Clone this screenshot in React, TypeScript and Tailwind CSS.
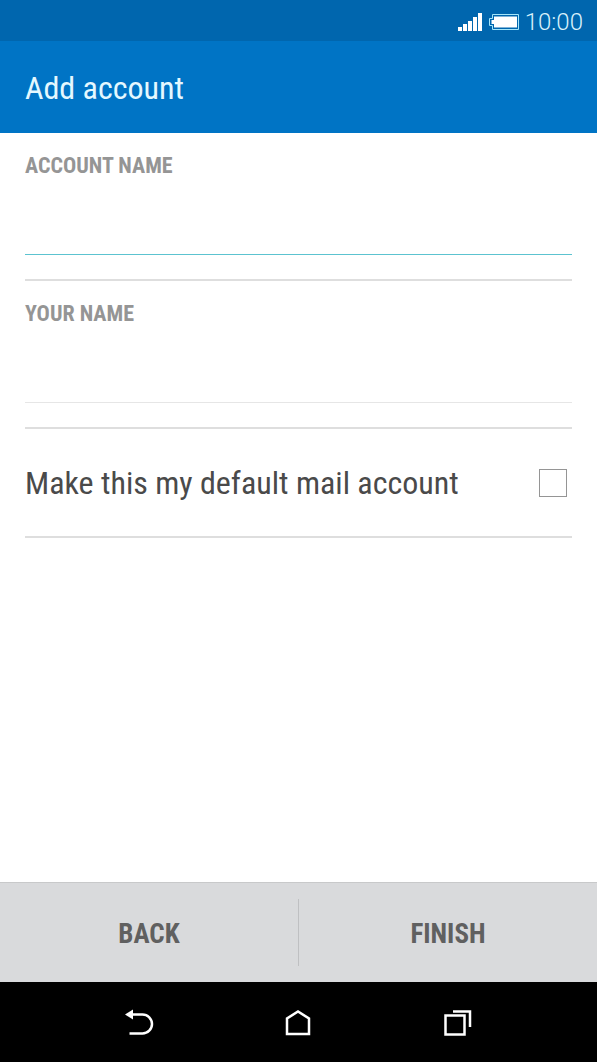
import { useState } from "react";

function StatusBar() {
  return (
    <div className="flex h-[41px] items-center justify-end bg-[#0066ae] pt-[2px] pr-[14px] text-[#d9f1fb]">
      <svg className="mr-[7px] h-[20px] w-[24px]" viewBox="0 0 24 20" fill="#fff" aria-hidden="true">
        <rect x="0" y="15" width="4" height="4" />
        <rect x="5" y="12" width="4" height="7" />
        <rect x="10" y="9" width="4" height="10" />
        <rect x="15" y="5" width="4" height="14" />
        <rect x="20" y="1" width="4" height="18" />
      </svg>
      <svg className="mr-[6px] h-[18px] w-[30px]" viewBox="0 0 30 18" aria-hidden="true">
        <path d="M3.5 1.5H29.5V16.5H3.5V12.5H0.5V5.5H3.5Z" fill="none" stroke="#a5e6fa" />
        <path d="M5 3.5H28V14.500H5V11H2.500V7H5Z" fill="#fff" />
      </svg>
      <span className="font-[Roboto] text-[24px] leading-[28px] font-light">10:00</span>
    </div>
  );
}

type FieldProps = {
  id: string;
  label: string;
  value: string;
  onChange: (value: string) => void;
  lineClass: string;
};

function Field({ id, label, value, onChange, lineClass }: FieldProps) {
  return (
    <div className="border-b-2 border-[#dedede] pt-[18px] pb-[24px]">
      <label htmlFor={id} className="block text-[22px] leading-[30px] font-bold text-[#959595] uppercase">
        {label}
      </label>
      <div className={`border-b ${lineClass}`}>
        <input
          id={id}
          type="text"
          value={value}
          onChange={(e) => onChange(e.target.value)}
          className="block h-[73px] w-full bg-transparent text-[32px] text-[#4a4a4a] outline-none"
        />
      </div>
    </div>
  );
}

export default function App() {
  const [accountName, setAccountName] = useState("");
  const [yourName, setYourName] = useState("");
  const [isDefault, setIsDefault] = useState(false);

  return (
    <div className="flex min-h-screen flex-col bg-white font-['Roboto_Condensed',Roboto,sans-serif]">
      <StatusBar />
      <header className="flex h-[92px] items-center bg-[#0074c5] px-[25px] pt-[2px]">
        <h1 className="text-[32px] leading-[40px] text-[#e4f8ff]">Add account</h1>
      </header>

      <main className="flex-1 px-[25px]">
        <Field
          id="account-name"
          label="Account name"
          value={accountName}
          onChange={setAccountName}
          lineClass="border-b-[#5cc3d0]"
        />
        <Field
          id="your-name"
          label="Your name"
          value={yourName}
          onChange={setYourName}
          lineClass="border-b-[#e6e6e6]"
        />
        <div className="flex h-[109px] items-center justify-between border-b-2 border-[#dedede] pr-[5px]">
          <label htmlFor="default-account" className="text-[32px] leading-[40px] text-[#4a4a4a]">
            Make this my default mail account
          </label>
          <input
            id="default-account"
            type="checkbox"
            checked={isDefault}
            onChange={(e) => setIsDefault(e.target.checked)}
            className="size-[28px] shrink-0 appearance-none border border-[#959595] bg-white checked:bg-[#0074c5]"
          />
        </div>
      </main>

      <footer className="flex h-[100px] items-center border-t border-[#c8c9ca] bg-[#d9dadc] text-[27px] leading-[32px] font-bold text-[#606060]">
        <button type="button" className="h-[67px] flex-1 border-r border-[#bfc0c2] pt-[2px] uppercase">
          Back
        </button>
        <button type="button" className="h-[67px] flex-1 pt-[2px] uppercase">
          Finish
        </button>
      </footer>

      <nav className="flex h-[80px] items-center justify-center gap-[119px] bg-black pr-[2px]">
        <button type="button" aria-label="Back">
          <svg className="h-[40px] w-[40px]" viewBox="0 0 40 40" fill="none">
            <path d="M13 12.500H23.500A9.500 9.500 0 0 1 23.500 31.500H10.500" stroke="#fff" strokeWidth="2.500" />
            <path d="M6 12.500L14 7.500V17.500Z" fill="#fff" />
          </svg>
        </button>
        <button type="button" aria-label="Home">
          <svg className="h-[40px] w-[40px]" viewBox="0 0 40 40" fill="none">
            <path d="M9 32V16.500L20 9.500L31 16.500V32Z" stroke="#fff" strokeWidth="2.500" />
          </svg>
        </button>
        <button type="button" aria-label="Recent apps">
          <svg className="h-[40px] w-[40px]" viewBox="0 0 40 40" fill="none" stroke="#fff">
            <path d="M8.500 13.500H27.500V32.500H8.500Z" strokeWidth="2.500" />
            <path d="M16 9.500H33V25" strokeWidth="2.500" />
          </svg>
        </button>
      </nav>
    </div>
  );
}
